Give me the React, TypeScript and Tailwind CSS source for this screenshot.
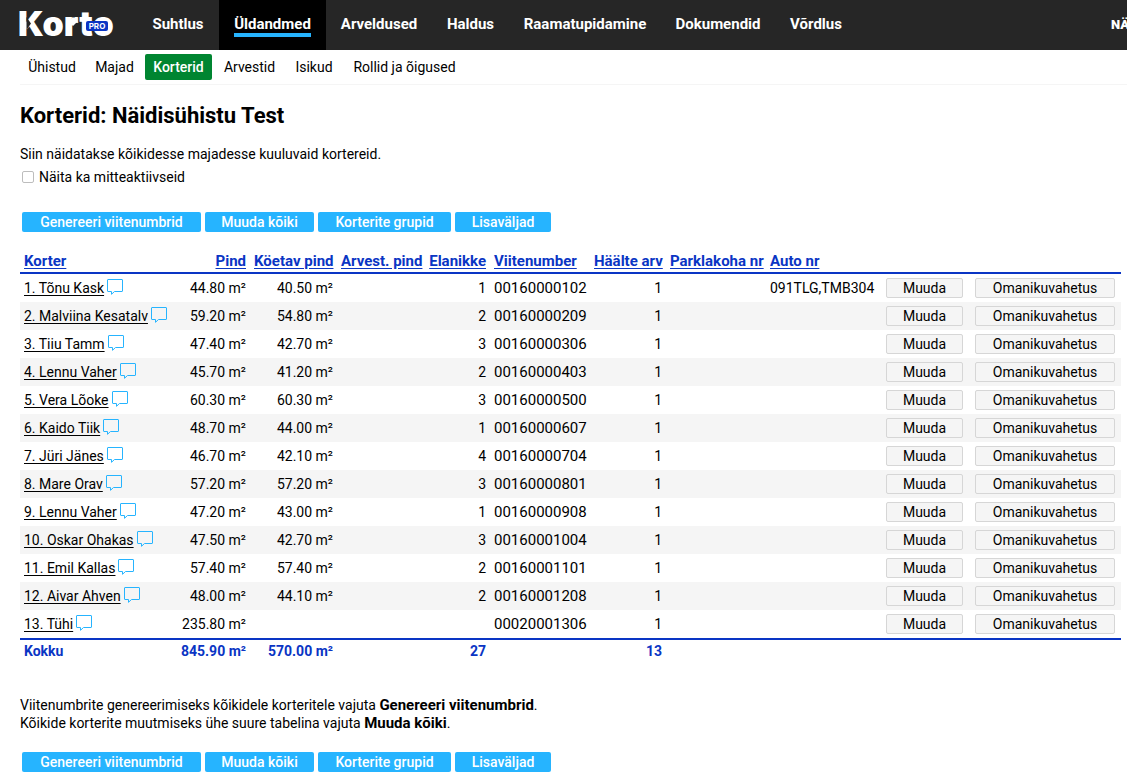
import React, { useState } from "react";

type Apartment = {
  name: string;
  area: string;
  heated: string;
  residents: string;
  reference: string;
  votes: string;
  cars?: string;
};

const mainMenu = [
  { label: "Suhtlus", width: "w-[82px]" },
  { label: "Üldandmed", width: "w-[107px]", active: true },
  { label: "Arveldused", width: "w-[106px]" },
  { label: "Haldus", width: "w-[77px]" },
  { label: "Raamatupidamine", width: "w-[152px]" },
  { label: "Dokumendid", width: "w-[114px]" },
  { label: "Võrdlus", width: "w-[82px]" },
];

const subMenu = [
  { label: "Ühistud", width: "w-[64px]" },
  { label: "Majad", width: "w-[53px]" },
  { label: "Korterid", width: "w-[67px]", active: true },
  { label: "Arvestid", width: "w-[67px]" },
  { label: "Isikud", width: "w-[54px]" },
  { label: "Rollid ja õigused", width: "w-[119px]" },
];

const actions = [
  { label: "Genereeri viitenumbrid", width: "w-[179px]" },
  { label: "Muuda kõiki", width: "w-[109px]" },
  { label: "Korterite grupid", width: "w-[133px]" },
  { label: "Lisaväljad", width: "w-[96px]" },
];

const columns = [
  { label: "Korter", width: "", align: "text-left" },
  { label: "Pind", width: "w-[74px]", align: "text-right" },
  { label: "Köetav pind", width: "w-[87px]", align: "text-right" },
  { label: "Arvest. pind", width: "w-[88px]", align: "text-right" },
  { label: "Elanikke", width: "w-[65px]", align: "text-right" },
  { label: "Viitenumber", width: "w-[100px]", align: "text-left" },
  { label: "Häälte arv", width: "w-[76px]", align: "text-right" },
  { label: "Parklakoha nr", width: "w-[100px]", align: "text-left" },
  { label: "Auto nr", width: "w-[114px]", align: "text-left" },
];

const apartments: Apartment[] = [
  { name: "1. Tõnu Kask", area: "44.80 m²", heated: "40.50 m²", residents: "1", reference: "00160000102", votes: "1", cars: "091TLG,TMB304" },
  { name: "2. Malviina Kesatalv", area: "59.20 m²", heated: "54.80 m²", residents: "2", reference: "00160000209", votes: "1" },
  { name: "3. Tiiu Tamm", area: "47.40 m²", heated: "42.70 m²", residents: "3", reference: "00160000306", votes: "1" },
  { name: "4. Lennu Vaher", area: "45.70 m²", heated: "41.20 m²", residents: "2", reference: "00160000403", votes: "1" },
  { name: "5. Vera Lõoke", area: "60.30 m²", heated: "60.30 m²", residents: "3", reference: "00160000500", votes: "1" },
  { name: "6. Kaido Tiik", area: "48.70 m²", heated: "44.00 m²", residents: "1", reference: "00160000607", votes: "1" },
  { name: "7. Jüri Jänes", area: "46.70 m²", heated: "42.10 m²", residents: "4", reference: "00160000704", votes: "1" },
  { name: "8. Mare Orav", area: "57.20 m²", heated: "57.20 m²", residents: "3", reference: "00160000801", votes: "1" },
  { name: "9. Lennu Vaher", area: "47.20 m²", heated: "43.00 m²", residents: "1", reference: "00160000908", votes: "1" },
  { name: "10. Oskar Ohakas", area: "47.50 m²", heated: "42.70 m²", residents: "3", reference: "00160001004", votes: "1" },
  { name: "11. Emil Kallas", area: "57.40 m²", heated: "57.40 m²", residents: "2", reference: "00160001101", votes: "1" },
  { name: "12. Aivar Ahven", area: "48.00 m²", heated: "44.10 m²", residents: "2", reference: "00160001208", votes: "1" },
  { name: "13. Tühi", area: "235.80 m²", heated: "", residents: "", reference: "00020001306", votes: "1" },
];

const Logo = () => (
  <a
    href="#"
    className="relative flex w-[117px] shrink-0 items-center pb-[3px] pl-[18px] font-[Inter,sans-serif] text-[34px] leading-[44px] font-black text-white"
  >
    Korto
    {/* notch in the K and the diamond on the r */}
    <svg
      className="absolute top-0 left-0"
      width="117"
      height="46"
      viewBox="0 0 117 46"
    >
      <path d="M26.500 17L31 23.500L26.500 30Z" fill="#262626" />
      <path d="M73 17L77.500 21.500L73 26L68.500 21.500Z" fill="#fff" />
    </svg>
    <span className="absolute top-[21px] left-[86px] flex h-[10px] w-[22px] items-center justify-center rounded-[2px] bg-[#0a35c4] text-[8px] leading-[10px] font-bold">
      PRO
    </span>
  </a>
);

const CommentIcon = () => (
  <svg width="16" height="16" viewBox="0 0 16 16" fill="none" stroke="#26b4ff">
    <path d="M.5 1Q.5 .5 1 .5H15Q15.500 .5 15.500 1V12Q15.500 12.500 15 12.500H7.500L4.500 15.300V12.500H1Q.5 12.500 .5 12Z" />
  </svg>
);

const ActionBar = () => (
  <div className="flex gap-1 px-0.5">
    {actions.map((action) => (
      <button
        key={action.label}
        type="button"
        className={`h-5 rounded-[2px] bg-[#26b4ff] text-center leading-5 font-medium whitespace-nowrap text-white ${action.width}`}
      >
        {action.label}
      </button>
    ))}
  </div>
);

const RowButton = ({ label }: { label: string }) => (
  <button
    type="button"
    className="block h-5 w-full rounded-[2px] border border-[#d6d6d6] bg-[#f5f5f5] leading-[18px]"
  >
    {label}
  </button>
);

const App = () => {
  const [showInactive, setShowInactive] = useState(false);

  return (
    <div className="overflow-x-hidden bg-white font-[Roboto,sans-serif] text-[14px] leading-[18px] text-black">
      <header className="flex h-[50px] overflow-hidden bg-[#262626]">
        <Logo />
        <nav className="ml-5 flex">
          {mainMenu.map((item) => (
            <a
              key={item.label}
              href="#"
              className={`flex shrink-0 flex-col items-center pt-[15px] text-[15px] font-bold text-white ${item.width} ${item.active ? "bg-black" : ""}`}
            >
              <span
                className={item.active ? "border-b-4 border-[#26b4ff]" : ""}
              >
                {item.label}
              </span>
            </a>
          ))}
        </nav>
        <a
          href="#"
          className="-mr-[98px] ml-auto w-[114px] shrink-0 pt-4 text-[13px] font-black whitespace-nowrap text-white"
        >
          NÄIDISÜHISTU
        </a>
      </header>

      <div className="pl-5">
        <nav className="flex gap-1 border-b border-[#f5f5f5] pt-1 pb-1">
          {subMenu.map((item) => (
            <a
              key={item.label}
              href="#"
              className={`rounded-[2px] text-center leading-[26px] whitespace-nowrap ${item.width} ${item.active ? "bg-[#008531] font-medium text-white" : ""}`}
            >
              {item.label}
            </a>
          ))}
        </nav>

        <main className="pt-[18px] pr-1.5">
          <h1 className="text-[22px] leading-[26px] font-bold">
            Korterid: Näidisühistu Test
          </h1>
          <p className="mt-4">
            Siin näidatakse kõikidesse majadesse kuuluvaid kortereid.
          </p>
          <label className="mt-[5px] flex items-center gap-[5px] pl-0.5">
            <input
              type="checkbox"
              checked={showInactive}
              onChange={(e) => setShowInactive(e.target.checked)}
              className="h-3 w-3 appearance-none rounded-[2px] border border-[#bdbdbd] checked:bg-[#26b4ff]"
            />
            Näita ka mitteaktiivseid
          </label>

          <div className="mt-[26px]">
            <ActionBar />
          </div>

          <table className="mt-[18px] w-full table-fixed border-separate border-spacing-0 whitespace-nowrap">
            <thead>
              <tr className="h-6">
                {columns.map((column) => (
                  <th
                    key={column.label}
                    className={`border-b-2 border-[#0a35c4] px-1 text-[15px] font-bold text-[#0a35c4] ${column.width} ${column.align}`}
                  >
                    <a href="#" className="underline underline-offset-2">
                      {column.label}
                    </a>
                  </th>
                ))}
                <th className="w-[89px] border-b-2 border-[#0a35c4]" />
                <th className="w-[152px] border-b-2 border-[#0a35c4]" />
              </tr>
            </thead>
            <tbody>
              {apartments.map((row) => (
                <tr key={row.name} className="h-7 even:bg-[#f5f5f5]">
                  <td className="px-1">
                    <span className="flex items-start gap-[3px]">
                      <a href="#" className="underline underline-offset-2">
                        {row.name}
                      </a>
                      <CommentIcon />
                    </span>
                  </td>
                  <td className="px-1 text-right">{row.area}</td>
                  <td className="px-1 text-right">{row.heated}</td>
                  <td />
                  <td className="px-1 text-right">{row.residents}</td>
                  <td className="px-1 text-[15px]">{row.reference}</td>
                  <td className="px-1 text-right">{row.votes}</td>
                  <td />
                  <td className="px-1">{row.cars}</td>
                  <td className="px-1.5">
                    <RowButton label="Muuda" />
                  </td>
                  <td className="px-1.5">
                    <RowButton label="Omanikuvahetus" />
                  </td>
                </tr>
              ))}
            </tbody>
            <tfoot>
              <tr className="h-6 font-bold text-[#0a35c4] [&>td]:border-t-2 [&>td]:border-[#0a35c4]">
                <td className="px-1">Kokku</td>
                <td className="px-1 text-right">845.90 m²</td>
                <td className="px-1 text-right">570.00 m²</td>
                <td />
                <td className="px-1 text-right">27</td>
                <td />
                <td className="px-1 text-right">13</td>
                <td colSpan={4} />
              </tr>
            </tfoot>
          </table>

          <p className="mt-[34px]">
            Viitenumbrite genereerimiseks kõikidele korteritele vajuta{" "}
            <b className="text-[15px]">Genereeri viitenumbrid</b>.
            <br />
            Kõikide korterite muutmiseks ühe suure tabelina vajuta{" "}
            <b className="text-[15px]">Muuda kõiki</b>.
          </p>
          <div className="mt-5 pb-[9px]">
            <ActionBar />
          </div>
        </main>
      </div>
    </div>
  );
};

export default App;
